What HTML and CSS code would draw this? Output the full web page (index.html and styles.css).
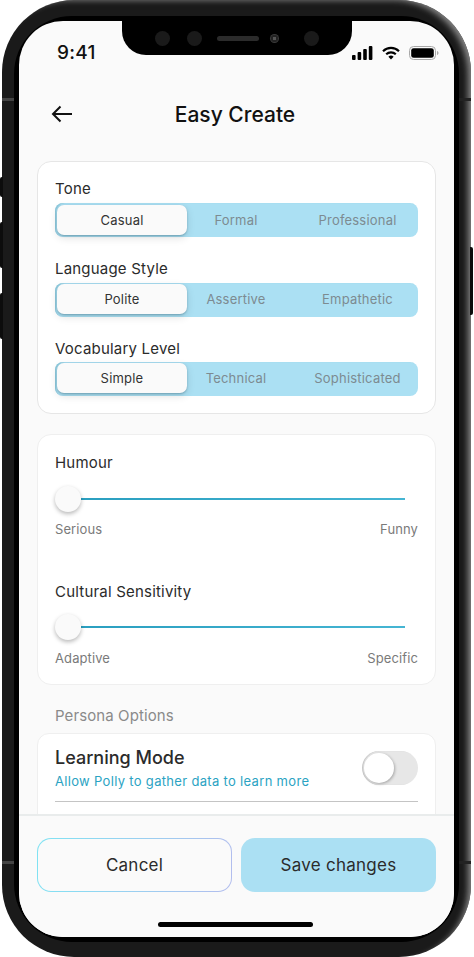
FILE: index.html
```html
<!DOCTYPE html>
<html lang="en">
<head>
<meta charset="utf-8">
<title>Easy Create</title>
<link rel="stylesheet" href="styles.css">
</head>
<body>
<div class="phone">
  <span class="side side-l1"></span>
  <span class="side side-l2"></span>
  <span class="side side-l3"></span>
  <span class="side side-r"></span>
  <span class="band band-l1"></span>
  <span class="band band-r1"></span>
  <span class="band band-l2"></span>
  <span class="band band-r2"></span>
  <div class="screen">
    <div class="notch">
      <span class="lens"></span>
      <span class="lens"></span>
      <span class="speaker"></span>
      <span class="cam"></span>
      <span class="lens lens-last"></span>
    </div>
    <div class="status">
      <span class="time">9:41</span>
      <div class="status-icons">
        <svg class="i-signal" width="21" height="14" viewBox="0 0 21 14"><rect x="0" y="9" width="3.6" height="5" rx="1"/><rect x="5.6" y="6" width="3.6" height="8" rx="1"/><rect x="11.2" y="3" width="3.6" height="11" rx="1"/><rect x="16.8" y="0" width="3.6" height="14" rx="1"/></svg>
        <svg class="i-wifi" width="18" height="14" viewBox="0 0 18 14"><path d="M1 5.2a11.5 11.5 0 0 1 16 0" fill="none" stroke="#000" stroke-width="2.2"/><path d="M4.2 8.3a7 7 0 0 1 9.6 0" fill="none" stroke="#000" stroke-width="2.2"/><path d="M9 13.6 6.4 10.8a3.7 3.7 0 0 1 5.2 0z"/></svg>
        <svg class="i-batt" width="30" height="14" viewBox="0 0 30 14"><rect x="0.5" y="0.5" width="26" height="13" rx="4" fill="none" stroke="#a8a8a8"/><rect x="2.2" y="2.2" width="22.6" height="9.6" rx="2.4"/><path d="M28 5v4c.9-.3 1.500-1.100 1.500-2s-.6-1.700-1.500-2z" fill="#a8a8a8"/></svg>
      </div>
    </div>
    <header class="topbar">
      <svg class="back" width="22" height="18" viewBox="0 0 22 18"><path d="M21 9H2M9.500 1.500 2 9l7.500 7.500" fill="none" stroke="#111" stroke-width="2"/></svg>
      <h1 class="title">Easy Create</h1>
    </header>
    <main class="content">
      <section class="card card-seg">
        <div class="field">
          <div class="label">Tone</div>
          <div class="seg">
            <span class="opt opt-on">Casual</span>
            <span class="opt">Formal</span>
            <span class="opt">Professional</span>
          </div>
        </div>
        <div class="field">
          <div class="label">Language Style</div>
          <div class="seg">
            <span class="opt opt-on">Polite</span>
            <span class="opt">Assertive</span>
            <span class="opt">Empathetic</span>
          </div>
        </div>
        <div class="field">
          <div class="label">Vocabulary Level</div>
          <div class="seg">
            <span class="opt opt-on">Simple</span>
            <span class="opt">Technical</span>
            <span class="opt">Sophisticated</span>
          </div>
        </div>
      </section>
      <section class="card card-sliders">
        <div class="slider-field">
          <div class="label">Humour</div>
          <div class="slider"><span class="thumb"></span><span class="track"></span></div>
          <div class="ends"><span>Serious</span><span>Funny</span></div>
        </div>
        <div class="slider-field">
          <div class="label">Cultural Sensitivity</div>
          <div class="slider"><span class="thumb"></span><span class="track"></span></div>
          <div class="ends"><span>Adaptive</span><span>Specific</span></div>
        </div>
      </section>
      <h2 class="section-title">Persona Options</h2>
      <section class="card card-persona">
        <div class="persona-row">
          <div>
            <div class="persona-name">Learning Mode</div>
            <div class="persona-sub">Allow Polly to gather data to learn more</div>
          </div>
          <span class="toggle"><span class="knob"></span></span>
        </div>
      </section>
    </main>
    <footer class="footer">
      <div class="actions">
        <button class="btn btn-cancel" type="button">Cancel</button>
        <button class="btn btn-save" type="button">Save changes</button>
      </div>
      <span class="home"></span>
    </footer>
  </div>
</div>
</body>
</html>
```
FILE: styles.css
```css
* { box-sizing: border-box; }
html, body { margin: 0; padding: 0; background: #fff; }
body { width: 474px; height: 957px; overflow: hidden; font-family: Inter, "Liberation Sans", sans-serif; color: #2b2b2b; }

.phone {
  position: relative;
  width: 469px;
  height: 957px;
  margin-left: 2px;
  padding: 21px 17px 20px;
  border-radius: 72px;
  background: #1a1a1a;
  box-shadow: inset -6px 3px 6px -3px #8a8a8a;
}
.phone::before {
  content: "";
  position: absolute;
  left: 12px; right: 12px; top: 16px; bottom: 15px;
  border-radius: 58px;
  background: #000;
}
.side { position: absolute; width: 3px; background: #0c0c0c; }
.side-l1 { left: -2px; top: 177px; height: 20px; border-radius: 2px 0 0 2px; }
.side-l2 { left: -2px; top: 222px; height: 46px; border-radius: 2px 0 0 2px; }
.side-l3 { left: -2px; top: 293px; height: 46px; border-radius: 2px 0 0 2px; }
.side-r { right: -2px; top: 247px; height: 68px; border-radius: 0 2px 2px 0; }
.band { position: absolute; height: 3px; width: 12px; background: #444; }
.band-l1 { left: 0; top: 98px; }
.band-r1 { right: 0; top: 98px; background: #222; }
.band-l2 { left: 0; top: 861px; }
.band-r2 { right: 0; top: 861px; background: #222; }

.screen {
  position: relative;
  display: flex;
  flex-direction: column;
  height: 916px;
  border-radius: 44px;
  overflow: hidden;
  background: #fafafa;
}
.notch {
  position: absolute;
  left: 103px; top: 0;
  width: 230px; height: 34px;
  display: flex;
  align-items: center;
  padding: 0 33px;
  background: #000;
  border-radius: 0 0 24px 24px;
  z-index: 2;
}
.lens { width: 15px; height: 15px; border-radius: 50%; background: #1a1a1a; margin-right: 18px; flex: none; }
.lens:first-child { margin-right: 17px; }
.speaker { width: 42px; height: 5px; border-radius: 3px; background: #2b2b2b; flex: none; margin-left: -3px; margin-right: 11px; }
.cam { width: 9px; height: 9px; border-radius: 50%; background: radial-gradient(circle, #555 0 25%, #222 30% 55%, #3a3a3a 60%); flex: none; margin-right: 24.5px; }
.lens-last { margin-right: 0; }

.status {
  display: flex;
  justify-content: space-between;
  align-items: center;
  height: 65px;
  padding: 0 15px 2px 38px;
  flex: none;
}
.time { font-size: 19px; font-weight: 500; line-height: 20px; color: #111; letter-spacing: 0.3px; }
.status-icons { display: flex; gap: 8px; align-items: center; }
.status-icons svg { display: block; }
.i-signal { margin-right: 1px; }
.i-batt { margin-left: 1px; }

.topbar {
  position: relative;
  display: flex;
  justify-content: center;
  align-items: center;
  height: 58px;
  padding-right: 3px;
  flex: none;
}
.back { position: absolute; left: 32px; top: 19px; }
.title { margin: 0; font-size: 21px; font-weight: 500; line-height: 28px; color: #111; }

.content {
  flex: 1;
  min-height: 0;
  overflow: hidden;
  padding: 17px 18px 0;
  display: flex;
  flex-direction: column;
}
.card {
  background: #fff;
  border: 1px solid #e6e6e6;
  border-radius: 14px;
  flex: none;
}
.card-seg { padding: 18px 17px 0; height: 253px; display: flex; flex-direction: column; gap: 23px; }
.label { font-size: 15px; line-height: 18px; color: #2b2b2b; letter-spacing: 0.2px; }
.seg {
  display: grid;
  grid-template-columns: 130px 98px 1fr;
  height: 34px;
  margin-top: 5px;
  padding: 2px 0 2px 2px;
  border-radius: 8px;
  background: #abe0f3;
  box-shadow: inset 2px 1px 1px -1px #8cc7da;
}
.field:last-child .seg { margin-top: 4px; }
.field + .field .opt { position: relative; top: -1px; }
.opt {
  display: flex;
  align-items: center;
  justify-content: center;
  font-size: 13px;
  letter-spacing: 0.2px;
  color: #7d8b91;
}
.opt:last-child { padding-left: 12px; }
.opt-on {
  color: #333;
  background: #fafafa;
  border-radius: 7px;
  box-shadow: 0 1px 2px rgba(60,110,130,.45), 0 3px 8px rgba(0,0,0,.12);
}
.card-sliders { margin-top: 20px; padding: 19px 17px 0; height: 251px; border-color: #efefef; }
.slider-field { height: 128px; }
.slider { position: relative; display: flex; align-items: center; height: 26px; margin-top: 14px; }
.thumb {
  width: 26px; height: 26px;
  border-radius: 50%;
  background: #fafafa;
  box-shadow: 0 2px 4px rgba(0,0,0,.28);
  flex: none;
  z-index: 1;
}
.track { width: 324px; height: 2px; background: linear-gradient(90deg, #2a9fc0, #45b5d3); }
.ends { display: flex; justify-content: space-between; margin-top: 9px; font-size: 13px; line-height: 16px; color: #7a7a7a; letter-spacing: 0.1px; }
.slider-field + .slider-field .label { margin-top: 1px; }
.slider-field + .slider-field .slider { margin-top: 13px; }
.slider-field + .slider-field .ends { margin-top: 10px; }

.section-title { margin: 21px 0 0 18px; font-size: 15px; font-weight: 400; line-height: 20px; color: #8a8a8a; letter-spacing: 0.1px; flex: none; }
.card-persona { margin-top: 7px; padding: 13px 17px 0; height: 120px; border-color: #efefef; border-radius: 12px; }
.persona-row { display: flex; justify-content: space-between; align-items: flex-start; height: 55px; border-bottom: 1px solid #c4c4c4; }
.persona-name { font-size: 18px; font-weight: 500; line-height: 22px; color: #2b2b2b; }
.persona-sub { font-size: 13px; line-height: 16px; margin-top: 4px; color: #2ba3c3; letter-spacing: 0.32px; }
.toggle { display: block; width: 56px; height: 34px; margin-top: 4px; padding: 2px; border-radius: 17px; background: #e7e7e7; box-shadow: inset 1px 0 1px rgba(0,0,0,.15); flex: none; }
.knob { display: block; width: 30px; height: 30px; border-radius: 50%; background: #fff; box-shadow: 1px 1px 3px rgba(0,0,0,.28); }

.footer {
  position: relative;
  flex: none;
  height: 123px;
  background: #fafafa;
  border-top: 2px solid #e9ecec;
  padding: 22px 18px 0;
}
.actions { display: flex; gap: 9px; }
.btn { width: 195px; height: 54px; font: 400 17px/1 Inter, "Liberation Sans", sans-serif; color: #2b2b2b; border-radius: 14px; letter-spacing: 0.25px; padding: 0; }
.btn-cancel {
  border: 1px solid transparent;
  background: linear-gradient(#fafafa, #fafafa) padding-box, linear-gradient(100deg, #7fe3f3, #b3bdee) border-box;
}
.btn-save { border: 0; background: #abe0f3; }
.home { position: absolute; left: 139px; top: 106px; width: 155px; height: 5px; border-radius: 3px; background: #000; }
```
